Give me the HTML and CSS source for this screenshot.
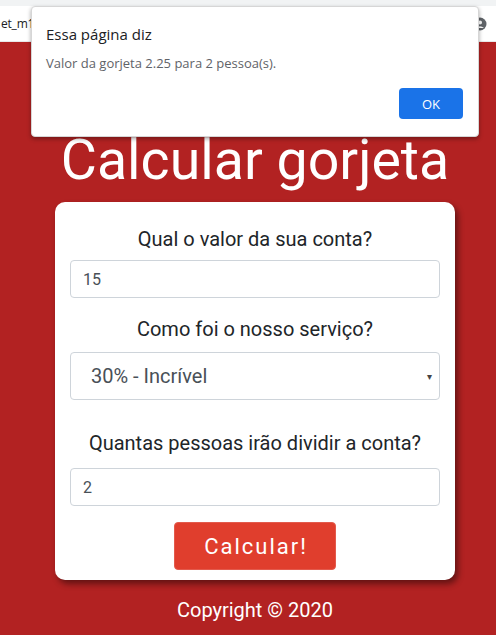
FILE: index.html
```html
<!DOCTYPE html>
<html lang="pt-BR">
<head>
<meta charset="utf-8">
<title>Calcular gorjeta</title>
<link rel="stylesheet" href="styles.css">
</head>
<body>
<div class="chrome">
  <div class="chrome-strip"></div>
  <div class="chrome-bar">
    <span class="url">et_m1</span>
    <svg class="profile" width="14" height="14" viewBox="0 0 14 14"><circle cx="7" cy="7" r="6.5" fill="#5f6368"/><circle cx="7" cy="5.5" r="2" fill="#fff"/><path d="M3 11 Q7 7.5 11 11" fill="#fff"/></svg>
  </div>
</div>
<main class="page">
  <h1 class="title">Calcular gorjeta</h1>
  <form class="card">
    <label class="label" for="conta">Qual o valor da sua conta?</label>
    <input class="field" id="conta" type="text" value="15">
    <label class="label label-2" for="servico">Como foi o nosso serviço?</label>
    <div class="select">
      <span>30% - Incrível</span>
      <span class="caret">&#9662;</span>
    </div>
    <label class="label label-3" for="pessoas">Quantas pessoas irão dividir a conta?</label>
    <input class="field" id="pessoas" type="text" value="2">
    <button class="btn" type="button">Calcular!</button>
  </form>
  <footer class="copy">Copyright © 2020</footer>
</main>
<div class="dialog">
  <div class="dialog-title">Essa página diz</div>
  <div class="dialog-msg">Valor da gorjeta 2.25 para 2 pessoa(s).</div>
  <div class="dialog-actions"><button class="ok" type="button">OK</button></div>
</div>
</body>
</html>
```
FILE: styles.css
```css
* { box-sizing: border-box; }
html, body { margin: 0; padding: 0; }
body {
  width: 496px;
  height: 635px;
  overflow: hidden;
  background: #b22222;
  font-family: Roboto, "Liberation Sans", sans-serif;
  position: relative;
}
.chrome { background: #fff; }
.chrome-strip { height: 6px; background: #f1f3f4; }
.chrome-bar {
  height: 36px;
  display: flex;
  align-items: center;
  justify-content: space-between;
  padding: 0 9px 0 1px;
  border-bottom: 1px solid #e8e8e8;
}
.url {
  font-family: "Open Sans", "Noto Sans", sans-serif;
  font-size: 12px;
  letter-spacing: -0.2px;
  color: #202124;
  margin-top: -1px;
}
.profile { display: block; }
.page {
  display: flex;
  flex-direction: column;
  align-items: center;
  width: 400px;
  margin-left: 55px;
  padding-top: 86px;
}
.title {
  margin: 0 0 8px;
  font-size: 55.5px;
  font-weight: 400;
  line-height: 66px;
  color: #fff;
  white-space: nowrap;
}
.card {
  width: 400px;
  background: #fff;
  border-radius: 10px;
  box-shadow: 3px 4px 6px rgba(0,0,0,0.45);
  padding: 24px 15px 10px;
  display: flex;
  flex-direction: column;
  align-items: stretch;
}
.label {
  display: block;
  text-align: center;
  font-size: 20px;
  line-height: 26px;
  color: #212529;
  margin-bottom: 8px;
}
.label-2 { margin-top: 18px; margin-bottom: 10px; }
.label-3 { margin-top: 30px; margin-bottom: 12px; }
.field {
  display: block;
  width: 100%;
  height: 38px;
  border: 1px solid #ced4da;
  border-radius: 4px;
  padding: 0 12px;
  font-family: Roboto, "Liberation Sans", sans-serif;
  font-size: 16px;
  color: #495057;
  background: #fff;
}
.select {
  height: 48px;
  border: 1px solid #ced4da;
  border-radius: 4px;
  display: flex;
  align-items: center;
  justify-content: space-between;
  padding: 0 7px 0 20px;
  font-size: 20px;
  color: #495057;
}
.caret { font-size: 10px; color: #444; }
.btn {
  align-self: center;
  margin-top: 16px;
  width: 162px;
  height: 48px;
  border: 1px solid #e35a4c;
  border-radius: 4px;
  background: #e03e2d;
  color: #fff;
  font-family: Roboto, "Liberation Sans", sans-serif;
  font-size: 22px;
  letter-spacing: 2px;
  padding: 0 0 0 2px;
}
.copy {
  margin-top: 18px;
  font-size: 20px;
  line-height: 24px;
  color: #fff;
}
.dialog {
  position: absolute;
  left: 31px;
  top: 6px;
  width: 448px;
  height: 131px;
  background: #fff;
  border: 1px solid #d6d6d6;
  border-radius: 4px;
  box-shadow: 0 2px 4px rgba(0,0,0,0.35);
  padding: 17px 15px 0 14px;
  font-family: "Open Sans", "Noto Sans", sans-serif;
  display: flex;
  flex-direction: column;
}
.dialog-title {
  font-size: 15px;
  line-height: 20px;
  color: #202124;
}
.dialog-msg {
  margin-top: 10px;
  font-size: 13px;
  line-height: 18px;
  color: #5f6368;
}
.dialog-actions {
  display: flex;
  justify-content: flex-end;
  margin-top: 16px;
}
.ok {
  width: 64px;
  height: 31px;
  border: none;
  border-radius: 4px;
  background: #1a73e8;
  color: #fff;
  font-family: "Open Sans", "Noto Sans", sans-serif;
  font-size: 13px;
}
```
